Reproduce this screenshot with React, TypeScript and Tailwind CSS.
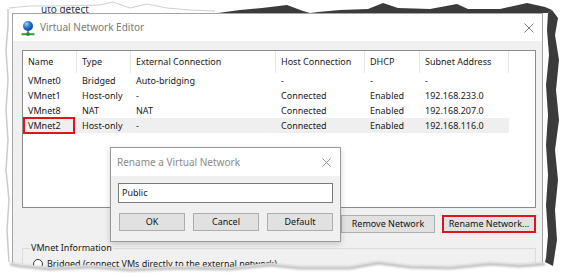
const rows = [
	{ name: 'VMnet0', type: 'Bridged', ext: 'Auto-bridging', host: '-', dhcp: '-', subnet: '-' },
	{ name: 'VMnet1', type: 'Host-only', ext: '-', host: 'Connected', dhcp: 'Enabled', subnet: '192.168.233.0' },
	{ name: 'VMnet8', type: 'NAT', ext: 'NAT', host: 'Connected', dhcp: 'Enabled', subnet: '192.168.207.0' },
	{ name: 'VMnet2', type: 'Host-only', ext: '-', host: 'Connected', dhcp: 'Enabled', subnet: '192.168.116.0', selected: true }
]

const columns = [
	{ key: 'name', label: 'Name', w: 'w-[54px]' },
	{ key: 'type', label: 'Type', w: 'w-[54px]' },
	{ key: 'ext', label: 'External Connection', w: 'w-[145px]' },
	{ key: 'host', label: 'Host Connection', w: 'w-[89px]' },
	{ key: 'dhcp', label: 'DHCP', w: 'w-[55px]' },
	{ key: 'subnet', label: 'Subnet Address', w: 'w-[89px]' }
] as const

// torn paper outline, clockwise
const paper =
	'9,9 30,7 60,7 100,6 113,3 130,9 147,5 167,9 190,11 215,12 240,12 300,13 548,13 ' +
	'547,30 549,55 546,85 548,115 546,145 548,175 546,205 548,235 546,258 545,262 ' +
	'520,264 490,262 450,266 410,265 378,261 350,266 300,266 270,263 230,267 180,266 130,268 90,265 50,267 20,264 10,262 ' +
	'8,230 10,200 7,170 9,140 7,110 9,80 7,50 9,25'

const CloseX = ({ size, color }: { size: number; color: string }) => (
	<svg width={size} height={size} viewBox="0 0 10 10">
		<path d="M0.5 0.5 L9.5 9.5 M9.5 0.5 L0.5 9.5" stroke={color} strokeWidth="1" />
	</svg>
)

const NetIcon = () => (
	<svg width="14" height="16" viewBox="0 0 14 16">
		<defs>
			<radialGradient id="globe" cx="0.35" cy="0.3" r="0.75">
				<stop offset="0" stopColor="#a8d4ff" />
				<stop offset="0.45" stopColor="#2c7ad6" />
				<stop offset="1" stopColor="#0b3f91" />
			</radialGradient>
		</defs>
		<circle cx="7" cy="6" r="5" fill="url(#globe)" />
		<rect x="6.3" y="11" width="1.4" height="2.5" fill="#6a6a6a" />
		<rect x="0.5" y="13.2" width="13" height="2" rx="0.5" fill="#2aa12a" />
		<rect x="5.5" y="12.6" width="3" height="3" fill="#1f8a1f" />
	</svg>
)

const Btn = ({ children, className = '' }: { children: React.ReactNode; className?: string }) => (
	<div
		className={`flex h-[18px] items-center justify-center border border-[#adadad] bg-[#e1e1e1] text-[9px] text-[#111] ${className}`}
	>
		{children}
	</div>
)

export default function App() {
	return (
		<div className="relative h-[278px] w-[567px] overflow-hidden bg-white font-['Noto_Sans',sans-serif] text-[#1a1a1a]">
			{/* window behind */}
			<div className="h-[13px] overflow-hidden pl-[41px] pt-[4px] text-[10px] leading-[10px] text-[#333]">
				uto detect
			</div>

			{/* Virtual Network Editor */}
			<div className="ml-[12px] w-[531px] border border-[#a5a5a5]">
				<div className="flex h-[27px] items-center bg-white pl-[8px] pr-[7px]">
					<NetIcon />
					<span className="ml-[5px] text-[10px] text-[#7a7a7a]">Virtual Network Editor</span>
					<div className="ml-auto flex items-center pr-[1px]">
						<CloseX size={10} color="#7d7d7d" />
					</div>
				</div>

				<div className="bg-[#f0f0f0] pl-[9px] pr-[6px] pt-[9px] pb-[20px]">
					{/* list view */}
					<div className="h-[158px] border border-[#8c8c8c] bg-white text-[9px]">
						<div className="flex h-[22px]">
							{columns.map(c => (
								<div
									key={c.key}
									className={`flex h-full items-center border-r border-[#e5e5e5] pl-[5px] ${c.w}`}
								>
									{c.label}
								</div>
							))}
						</div>
						<div className="flex flex-col">
							{rows.map(r => (
								<div
									key={r.name}
									className={`flex h-[15px] w-[486px] items-center ${r.selected ? 'bg-[#efefef]' : ''}`}
								>
									{columns.map(c => (
										<div key={c.key} className={`relative flex h-full items-center pl-[5px] ${c.w}`}>
											{r[c.key]}
											{r.selected && c.key === 'name' ? (
												<div className="absolute left-0 top-[-1px] h-[17px] w-[52px] border-2 border-[#e3131b]" />
											) : null}
										</div>
									))}
								</div>
							))}
						</div>
					</div>

					{/* buttons */}
					<div className="mt-[7px] flex justify-end gap-[7px]">
						<Btn className="w-[94px]">Remove Network</Btn>
						<Btn className="w-[94px] border-2 border-[#e3131b]">Rename Network...</Btn>
					</div>

					{/* VMnet information */}
					<fieldset className="mt-[9px] h-[60px] border border-[#dcdcdc] px-[7px]">
						<legend className="px-[1px] text-[9px] leading-[12px]">VMnet Information</legend>
						<div className="mt-[3px] flex items-center gap-[4px] pl-[3px] text-[9px]">
							<span className="h-[10px] w-[10px] rounded-full border border-[#333] bg-white" />
							Bridged (connect VMs directly to the external network)
						</div>
					</fieldset>
				</div>
			</div>

			{/* Rename a Virtual Network */}
			<div className="absolute left-[110px] top-[147px] w-[231px] border border-[#9a9a9a] shadow-[0_2px_6px_rgba(0,0,0,0.18)]">
				<div className="flex h-[28px] items-center bg-white pl-[6px] pr-[9px]">
					<span className="text-[10px] text-[#8a8a8a]">Rename a Virtual Network</span>
					<div className="ml-auto flex items-center">
						<CloseX size={9} color="#8a8a8a" />
					</div>
				</div>
				<div className="bg-[#f0f0f0] px-[7px] pt-[7px] pb-[10px]">
					<div className="flex h-[20px] w-[215px] items-center border border-[#7a7a7a] bg-white pl-[3px] text-[9px]">
						Public
					</div>
					<div className="mt-[10px] flex gap-[8px] pl-[1px]">
						<Btn className="w-[66px]">OK</Btn>
						<Btn className="w-[66px]">Cancel</Btn>
						<Btn className="w-[66px]">Default</Btn>
					</div>
				</div>
			</div>

			{/* torn paper edges */}
			<svg className="pointer-events-none absolute inset-0" width="567" height="278" viewBox="0 0 567 278">
				<defs>
					<filter id="soft" x="-5%" y="-50%" width="110%" height="200%">
						<feGaussianBlur stdDeviation="1.2" />
					</filter>
				</defs>
				<path d={`M0 0 H567 V278 H0 Z M${paper} Z`} fill="white" fillRule="evenodd" />
				<polyline
					points="545,262 520,264 490,262 450,266 410,265 378,261 350,266 300,266 270,263 230,267 180,266 130,268 90,265 50,267 20,264 10,262"
					transform="translate(0 2)"
					fill="none"
					stroke="#8a8a8a"
					strokeWidth="3"
					opacity="0.55"
					filter="url(#soft)"
				/>
				<polyline
					points="10,262 8,230 10,200 7,170 9,140 7,110 9,80 7,50 9,25 9,9"
					transform="translate(-1 0)"
					fill="none"
					stroke="#b5b5b5"
					strokeWidth="1.5"
					opacity="0.7"
				/>
				<polyline
					points="9,9 30,7 60,7 100,6 113,3 130,9 147,5 167,9 190,11 215,12"
					transform="translate(0 -1)"
					fill="none"
					stroke="#cfcfcf"
					strokeWidth="1"
				/>
				<polygon
					points="548,13 547,30 549,55 546,85 548,115 546,145 548,175 546,205 548,235 546,258 545,262 553,266 557,240 555,210 558,180 555,150 559,120 556,90 559,60 555,35 558,18 552,10"
					fill="#3b3b3b"
				/>
				<polygon
					points="218,13 240,10 262,8 287,5 303,11 310,13 318,12 340,10 368,9 383,3 398,8 430,9 457,4 468,9 500,9 527,3 545,7 552,10 548,13"
					fill="#3b3b3b"
				/>
			</svg>
		</div>
	)
}
